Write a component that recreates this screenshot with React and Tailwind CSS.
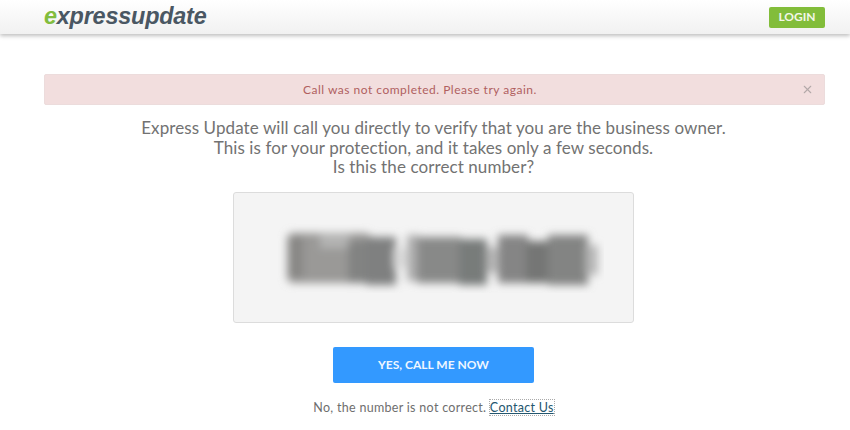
import React from 'react';
import { X } from 'lucide-react';

const bodyFont = "font-['Lato',sans-serif]";

const BlurredNumber = () => (
    <svg width="340" height="72" viewBox="0 0 340 72" aria-hidden="true">
        <defs>
            <filter id="smear" x="-10%" y="-30%" width="120%" height="160%">
                <feGaussianBlur stdDeviation="4.2" />
            </filter>
        </defs>
        <g filter="url(#smear)">
            <rect x="23" y="12" width="84" height="50" rx="6" fill="#9a9997" />
            <rect x="25" y="15" width="14" height="42" fill="#888785" />
            <rect x="56" y="13" width="30" height="14" fill="#b4b4b3" />
            <rect x="84" y="20" width="20" height="42" fill="#828382" />
            <rect x="102" y="16" width="30" height="48" fill="#7f8080" />
            <rect x="130" y="27" width="13" height="20" fill="#dcdcdc" />
            <rect x="143" y="14" width="12" height="46" fill="#aeaeae" />
            <rect x="153" y="16" width="44" height="46" fill="#888988" />
            <rect x="195" y="18" width="28" height="46" fill="#787b7a" />
            <rect x="223" y="26" width="11" height="26" fill="#bababa" />
            <rect x="234" y="14" width="30" height="48" fill="#858585" />
            <rect x="262" y="20" width="24" height="42" fill="#757675" />
            <rect x="284" y="14" width="40" height="50" fill="#838483" />
            <rect x="322" y="24" width="12" height="30" fill="#b8b8b8" />
        </g>
    </svg>
);

const App = () => {
    return (
        <div className={`h-[430px] w-[850px] overflow-hidden bg-white ${bodyFont}`}>
            <header className="flex h-[34px] items-center justify-between bg-gradient-to-b from-white to-[#f1f1f1] pl-[44px] pr-[25px] shadow-[0_2px_4px_rgba(0,0,0,0.25)]">
                <div className="font-['Liberation_Sans',sans-serif] text-[23.4px] font-bold italic leading-none tracking-[-0.2px] text-[#4a5763]">
                    <span className="text-[#82bd3e]">e</span>xpressupdate
                </div>
                <button className="flex h-[21px] w-[56px] items-center justify-center rounded-[2px] bg-[#82bd3a] text-[12px] font-bold text-[#f2f7e8]">
                    LOGIN
                </button>
            </header>

            <main className="flex flex-col items-center pl-[44px] pr-[25px] pt-[40px]">
                <div className="flex h-[31px] w-full items-center rounded-[2px] border border-[#ecdcdc] bg-[#f2dede]">
                    <span className="w-[258px]" />
                    <span className="text-[12px] tracking-[0.5px] text-[#b0605f]">Call was not completed. Please try again.</span>
                    <span className="flex flex-1 justify-end pr-[10px]">
                        <X size={13} strokeWidth={2} className="text-[#b3a9a9]" />
                    </span>
                </div>

                <div className="mr-[2px] mt-[13px] text-center text-[17px] leading-[19.5px] tracking-[0.09px] text-[#727272]">
                    <p>Express Update will call you directly to verify that you are the business owner.</p>
                    <p>This is for your protection, and it takes only a few seconds.</p>
                    <p>Is this the correct number?</p>
                </div>

                <div className="mr-[2px] mt-[15px] flex h-[131px] w-[401px] items-center justify-center rounded-[3px] border border-[#dcdcdc] bg-[#f4f4f4]">
                    <BlurredNumber />
                </div>

                <button className="mr-[2px] mt-[24px] h-[36px] w-[201px] rounded-[2px] bg-[#3399ff] text-[12px] font-bold text-[#eef6ff]">
                    YES, CALL ME NOW
                </button>

                <p className="mr-[2px] mt-[16px] text-[12.5px] leading-[17px] tracking-[0.3px] text-[#6e6e6e]">
                    No, the number is not correct.{' '}
                    <a href="#" className="text-[#24566e] underline outline-1 outline-dotted outline-[#aaa]">Contact Us</a>
                </p>
            </main>
        </div>
    );
};

export default App;
